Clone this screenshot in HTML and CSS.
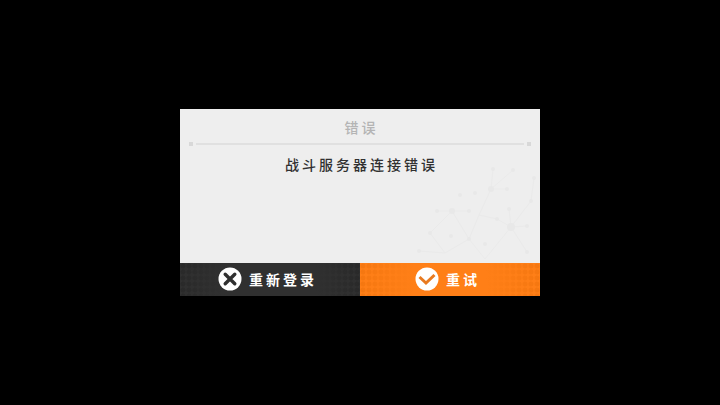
FILE: index.html
```html
<!DOCTYPE html>
<html lang="zh-CN">

<head>
    <meta charset="UTF-8">
    <meta name="viewport" content="width=device-width, initial-scale=1.0">
    <title>错误</title>
    <link rel="stylesheet" href="styles.css">
</head>

<body>
    <main class="dialog" role="alertdialog" aria-labelledby="title" aria-describedby="message">
        <div class="content">
            <svg class="network" viewBox="0 0 125 108" aria-hidden="true">
                <g fill="none" stroke="#eaeaea" stroke-width="1">
                    <path d="M22 56L37 56L54 56M37 56L15 78L30 98M37 56L54 84L70 104M54 84L30 98L4 96" />
                    <path d="M98 15L76 34L92 34M76 34L78 14M76 34L64 60L54 84M64 60L82 64L96 72" />
                    <path d="M96 72L112 71M96 72L94 54M96 72L116 46L119 23M96 72L112 97M96 72L70 104" />
                </g>
                <g fill="#e8e8e8">
                    <circle cx="37" cy="56" r="3" />
                    <circle cx="76" cy="34" r="3" />
                    <circle cx="96" cy="72" r="4" />
                    <circle cx="98" cy="15" r="2" />
                    <circle cx="78" cy="14" r="2" />
                    <circle cx="92" cy="34" r="2" />
                    <circle cx="22" cy="56" r="2" />
                    <circle cx="54" cy="56" r="2" />
                    <circle cx="45" cy="40" r="2" />
                    <circle cx="60" cy="38" r="2" />
                    <circle cx="15" cy="78" r="2" />
                    <circle cx="36" cy="81" r="2" />
                    <circle cx="54" cy="84" r="2" />
                    <circle cx="70" cy="89" r="2" />
                    <circle cx="82" cy="64" r="2" />
                    <circle cx="94" cy="54" r="2" />
                    <circle cx="112" cy="71" r="2" />
                    <circle cx="116" cy="46" r="2" />
                    <circle cx="119" cy="23" r="2" />
                    <circle cx="112" cy="97" r="2" />
                    <circle cx="4" cy="96" r="2" />
                </g>
            </svg>
            <h1 class="title" id="title">错误</h1>
            <div class="divider"></div>
            <p class="message" id="message">战斗服务器连接错误</p>
        </div>
        <div class="actions">
            <button class="action relogin" type="button">
                <svg class="icon" viewBox="0 0 24 24" aria-hidden="true">
                    <circle cx="12" cy="12" r="11.5" fill="#fff" />
                    <path d="M7.2 7.2L16.8 16.8M16.8 7.2L7.2 16.8" fill="none" stroke="#303030" stroke-width="3.4" stroke-linecap="round" />
                </svg>
                <span>重新登录</span>
            </button>
            <button class="action retry" type="button">
                <svg class="icon" viewBox="0 0 24 24" aria-hidden="true">
                    <circle cx="12" cy="12" r="11.5" fill="#fff" />
                    <path d="M4.5 10L11 16L19.5 8" fill="none" stroke="#e87a20" stroke-width="3" />
                </svg>
                <span>重试</span>
            </button>
        </div>
    </main>
</body>

</html>
```

FILE: styles.css
```css
body {
    margin: 0;
    min-height: 100vh;
    display: flex;
    align-items: center;
    justify-content: center;
    background: #000;
    font-family: "Noto Sans CJK SC", sans-serif;
    font-size: 14px;
    line-height: 20px;
    letter-spacing: 3px;
}

.dialog {
    width: 50%;
    min-width: 320px;
    background: #eee;
}

.content {
    position: relative;
    min-height: 138px;
    padding: 8px 9px;
    text-align: center;
}

/* faint decoration behind the text */
.network {
    position: absolute;
    right: 0;
    bottom: 0;
    width: 125px;
}

.title {
    position: relative;
    margin: 0;
    color: #b4b4b4;
    font-size: 14px;
    font-weight: 500;
    text-indent: 3px;
}

.divider {
    display: flex;
    align-items: center;
    justify-content: space-between;
    margin: 5px 0 8px;
    background: linear-gradient(#e0e0e0, #e0e0e0) center / calc(100% - 14px) 2px no-repeat;
}

.divider::before,
.divider::after {
    content: "";
    width: 4px;
    height: 4px;
    background: #d8d8d8;
}

.message {
    position: relative;
    margin: 0;
    color: #303030;
    font-weight: 500;
    text-indent: 3px;
}

.actions {
    display: flex;
}

.action {
    flex: 1;
    display: flex;
    align-items: center;
    justify-content: center;
    gap: 7px;
    height: 33px;
    margin: 0;
    padding: 0 5px 1px 0;
    border: 0;
    color: #fff;
    font: inherit;
    font-weight: 700;
    letter-spacing: inherit;
    cursor: pointer;
    background-size: 100% 100%, 6px 6px;
}

/* the dots show at both ends and fade towards the label */
.relogin {
    background-color: #303030;
    background-image:
        linear-gradient(90deg, transparent, #303030 25%, #303030 75%, transparent),
        radial-gradient(circle, #292929 2px, transparent 3px);
}

.retry {
    background-color: #ff7f17;
    background-image:
        linear-gradient(90deg, transparent, #ff7f17 30%, #ff7f17 70%, transparent),
        radial-gradient(circle, #f57710 2px, transparent 3px);
}

.icon {
    width: 24px;
    height: 24px;
}
```
